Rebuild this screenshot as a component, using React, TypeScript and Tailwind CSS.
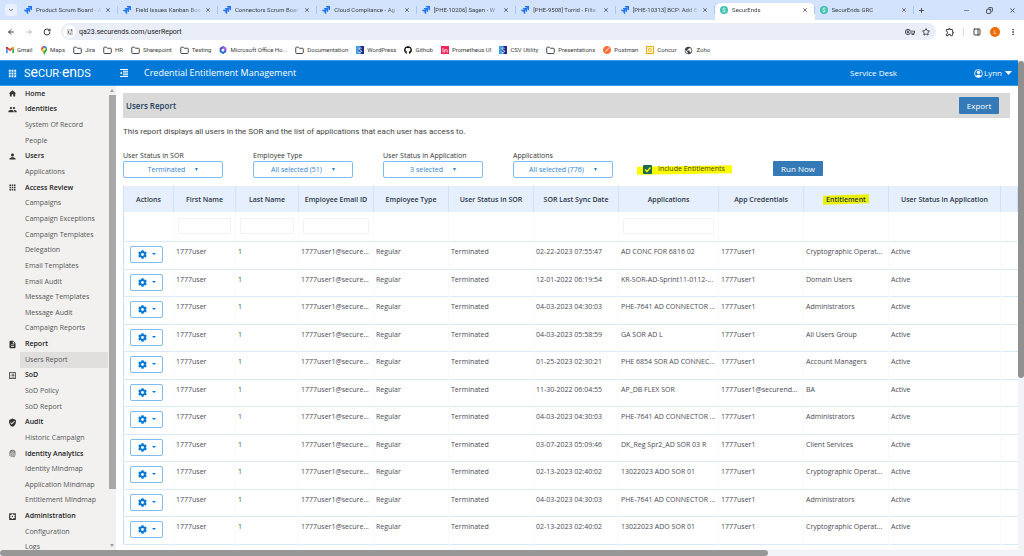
import type { ReactNode } from 'react'
import type { IconType } from 'react-icons'
import {
  MdApps,
  MdDescription,
  MdFingerprint,
  MdHome,
  MdListAlt,
  MdOutlineExtension,
  MdOutlineVpnKey,
  MdPeople,
  MdPerson,
  MdPublic,
  MdSettingsApplications,
  MdTune,
  MdVerifiedUser,
} from 'react-icons/md'
import { FaCog, FaGithub } from 'react-icons/fa'
import { SiJira, SiPostman } from 'react-icons/si'
import {
  ArrowLeft,
  ArrowRight,
  ChevronDown,
  Copy,
  EllipsisVertical,
  Folder,
  Minus,
  PanelRight,
  Plus,
  RotateCw,
  Star,
  X,
} from 'lucide-react'

const tabs = [
  { title: 'Product Scrum Board - A', jira: true },
  { title: 'Field Issues Kanban Boa', jira: true },
  { title: 'Connectors Scrum Boar', jira: true },
  { title: 'Cloud Compliance - Ag', jira: true },
  { title: '[PHE-10206] Sagen - W', jira: true },
  { title: '[PHE-9508] Torrid - Filte', jira: true },
  { title: '[PHE-10313] BCP: Add E', jira: true },
  { title: 'SecurEnds', jira: false, active: true },
  { title: 'SecurEnds GRC', jira: false },
]

type NavGroup = { label: string; icon: IconType; items: string[] }

const nav: NavGroup[] = [
  { label: 'Home', icon: MdHome, items: [] },
  { label: 'Identities', icon: MdPeople, items: ['System Of Record', 'People'] },
  { label: 'Users', icon: MdPerson, items: ['Applications'] },
  {
    label: 'Access Review',
    icon: MdApps,
    items: [
      'Campaigns',
      'Campaign Exceptions',
      'Campaign Templates',
      'Delegation',
      'Email Templates',
      'Email Audit',
      'Message Templates',
      'Message Audit',
      'Campaign Reports',
    ],
  },
  { label: 'Report', icon: MdDescription, items: ['Users Report'] },
  { label: 'SoD', icon: MdListAlt, items: ['SoD Policy', 'SoD Report'] },
  { label: 'Audit', icon: MdVerifiedUser, items: ['Historic Campaign'] },
  {
    label: 'Identity Analytics',
    icon: MdFingerprint,
    items: ['Identity Mindmap', 'Application Mindmap', 'Entitlement Mindmap'],
  },
  { label: 'Administration', icon: MdSettingsApplications, items: ['Configuration', 'Logs'] },
]

const filters = [
  { id: 'sor-status', label: 'User Status in SOR', value: 'Terminated' },
  { id: 'employee-type', label: 'Employee Type', value: 'All selected (51)' },
  { id: 'app-status', label: 'User Status in Application', value: '3 selected' },
  { id: 'applications', label: 'Applications', value: 'All selected (776)' },
]

const columns = [
  { label: 'Actions', width: 'w-[50px]' },
  { label: 'First Name', width: 'w-[62px]', filter: true },
  { label: 'Last Name', width: 'w-[63px]', filter: true },
  { label: 'Employee Email ID', width: 'w-[75px]', filter: true },
  { label: 'Employee Type', width: 'w-[75px]' },
  { label: 'User Status in SOR', width: 'w-[85px]' },
  { label: 'SOR Last Sync Date', width: 'w-[85px]' },
  { label: 'Applications', width: 'w-[100px]', filter: true },
  { label: 'App Credentials', width: 'w-[85px]' },
  { label: 'Entitlement', width: 'w-[85px]', highlight: true },
  { label: 'User Status in Application', width: 'w-[112px]' },
  { label: '', width: '' },
]

const rows = [
  ['02-22-2023 07:55:47', 'AD CONC FOR 6816 02', '1777user1', 'Cryptographic Operat...'],
  ['12-01-2022 06:19:54', 'KR-SOR-AD-Sprint11-0112-...', '1777user1', 'Domain Users'],
  ['04-03-2023 04:30:03', 'PHE-7641 AD CONNECTOR ...', '1777user1', 'Administrators'],
  ['04-03-2023 05:58:59', 'GA SOR AD L', '1777user1', 'All Users Group'],
  ['01-25-2023 02:30:21', 'PHE 6854 SOR AD CONNEC...', '1777user1', 'Account Managers'],
  ['11-30-2022 06:04:55', 'AP_DB FLEX SOR', '1777user1@securend...', 'BA'],
  ['04-03-2023 04:30:03', 'PHE-7641 AD CONNECTOR ...', '1777user1', 'Administrators'],
  ['03-07-2023 05:09:46', 'DK_Reg Spr2_AD SOR 03 R', '1777user1', 'Client Services'],
  ['02-13-2023 02:40:02', '13022023 ADO SOR 01', '1777user1', 'Cryptographic Operat...'],
  ['04-03-2023 04:30:03', 'PHE-7641 AD CONNECTOR ...', '1777user1', 'Administrators'],
  ['02-13-2023 02:40:02', '13022023 ADO SOR 01', '1777user1', 'Cryptographic Operat...'],
]

function SecurEndsIcon() {
  return (
    <svg viewBox="0 0 16 16" className="size-[8px] shrink-0">
      <circle cx="8" cy="8" r="8" fill="#3fc1b0" />
      <path d="M11 5.2C9.5 3.6 5.6 4 5.6 6.2c0 2.4 5 1.2 5 3.6 0 2.2-4 2.4-5.6.8" fill="none" stroke="#fff" strokeWidth="1.6" />
    </svg>
  )
}

function GmailIcon() {
  return (
    <svg viewBox="0 0 24 18" className="w-[8px]">
      <path d="M0 2v16h5V7z" fill="#4285f4" />
      <path d="M24 2v16h-5V7z" fill="#34a853" />
      <path d="M0 2.500C0 0 3 -1 5 .7l7 5.500 7-5.500c2-1.700 5-.700 5 1.800L12 12.500z" fill="#ea4335" />
      <path d="M0 2.500C0 0 3 -1 5 .7v6.200L0 3.500z" fill="#c5221f" />
      <path d="M24 2.500C24 0 21 -1 19 .7v6.200l5-3.400z" fill="#fbbc04" />
    </svg>
  )
}

function MapsIcon() {
  return (
    <svg viewBox="0 0 16 22" className="h-[9px]">
      <path d="M8 0a8 8 0 0 0-6 2.700L6 6z" fill="#ea4335" />
      <path d="M8 0a8 8 0 0 1 6 2.700L6 11 5 6z" fill="#4285f4" />
      <path d="M2 2.700C0 5 0 8.500 1.300 11l6-5z" fill="#ea4335" />
      <path d="M14 2.700C17 6 16 10 13 13c-3 3.500-3 6-5 9-1-3-1.500-5-3.500-7z" fill="#34a853" />
      <path d="M1.300 11c.8 1.600 2 2.800 3.200 4L11 7 7.500 5z" fill="#fbbc04" />
      <circle cx="8" cy="8" r="2.800" fill="#fff" />
    </svg>
  )
}

function OfficeIcon() {
  return (
    <svg viewBox="0 0 16 16" className="size-[8px]">
      <path d="M8 0l6.500 3.800v8L8 16l-6.500-4.200v-8z" fill="#4a53cf" />
      <path d="M8 0l6.500 3.800v4L8 5z" fill="#b45ae0" />
      <path d="M1.500 8v3.800L8 16l4-2.600z" fill="#2f7de1" />
      <circle cx="8" cy="8" r="3" fill="#fff" />
    </svg>
  )
}

function ShieldIcon() {
  return (
    <svg viewBox="0 0 16 16" className="size-[8px]">
      <path d="M0 0h16v16H0z" fill="#1d2b8f" />
      <path d="M0 0h9L5 8l5 8H0z" fill="#3fa0e8" />
      <path d="M11 4.500C8 3 5 4.500 6 6.500s5 1.500 5 4-4 3-6 1.500" fill="none" stroke="#fff" strokeWidth="2" />
    </svg>
  )
}

function PrometheusIcon() {
  return (
    <svg viewBox="0 0 16 16" className="size-[8px]">
      <path d="M0 0h16v16H0z" fill="#f0235a" />
      <path d="M4 4v9M7.500 13V7m0 2c1-2.500 5-2.500 5 .5V13" fill="none" stroke="#fff" strokeWidth="1.600" />
    </svg>
  )
}

function ConcurIcon() {
  return (
    <svg viewBox="0 0 16 16" className="size-[8px]">
      <path d="M1 1h14v14H1z" fill="#fff6dc" stroke="#f0ab00" strokeWidth="2" />
      <path d="M10.500 5.500C8 3.500 4.500 5 4.500 8s3.500 4.500 6 2.500M8 8h4" fill="none" stroke="#f0ab00" strokeWidth="1.800" />
    </svg>
  )
}

function OutdentIcon() {
  return (
    <svg viewBox="0 0 16 16" className="size-[8px]" fill="#fff">
      <path d="M0 0h16v2H0zM6 3.500h10v2H6zM6 7h10v2H6zM6 10.500h10v2H6zM0 14h16v2H0zM4 5v6L0 8z" />
    </svg>
  )
}

const folder = <Folder className="size-[9px] stroke-[2.5] text-[#3c4043]" />

const bookmarks: { label: string; icon: ReactNode }[] = [
  { label: 'Gmail', icon: <GmailIcon /> },
  { label: 'Maps', icon: <MapsIcon /> },
  { label: 'Jira', icon: folder },
  { label: 'HR', icon: folder },
  { label: 'Sharepoint', icon: folder },
  { label: 'Testing', icon: folder },
  { label: 'Microsoft Office Ho...', icon: <OfficeIcon /> },
  { label: 'Documentation', icon: folder },
  { label: 'WordPress', icon: <ShieldIcon /> },
  { label: 'Github', icon: <FaGithub className="size-[8px] text-black" /> },
  { label: 'Prometheus UI', icon: <PrometheusIcon /> },
  { label: 'CSV Utility', icon: <ShieldIcon /> },
  { label: 'Presentations', icon: folder },
  { label: 'Postman', icon: <SiPostman className="size-[8px] text-[#ff6c37]" /> },
  { label: 'Concur', icon: <ConcurIcon /> },
  { label: 'Zoho', icon: <MdPublic className="size-[9px] text-[#3c4043]" /> },
]

function Caret({ className }: { className: string }) {
  return (
    <svg viewBox="0 0 8 5" preserveAspectRatio="none" className={className} fill="currentColor">
      <path d="M0 0h8L4 5z" />
    </svg>
  )
}

function Browser() {
  return (
    <div className="shrink-0 font-[Roboto] text-[7px] leading-[10px] text-[#3c4043]">
      {/* Tab strip */}
      <div className="flex h-5 items-center bg-[#d3e3fd]">
        <button aria-label="Search tabs" className="mr-[2px] ml-[5px] flex size-3 items-center justify-center rounded bg-[#eaf1fe]">
          <ChevronDown className="size-[6px] stroke-3" />
        </button>
        <div className="mr-[4px] flex h-full min-w-0 flex-1">
          {tabs.map((tab) => (
            <div
              key={tab.title}
              className={
                tab.active
                  ? 'mt-[3px] flex min-w-0 flex-1 items-center rounded-t-md bg-white pr-[6px] pb-[3px] pl-[5px]'
                  : 'flex min-w-0 flex-1 items-center pr-[6px] pl-[5px]'
              }
            >
              {tab.jira ? <SiJira className="size-[8px] shrink-0 text-[#1f74f2]" /> : <SecurEndsIcon />}
              <span className="ml-1 flex-1 text-[6px] whitespace-nowrap [mask-image:linear-gradient(to_right,black_80%,transparent)]">
                {tab.title}
              </span>
              <button aria-label="Close tab" className="ml-[3px]">
                <X className="size-[6px] stroke-3" />
              </button>
              <span className="-mr-[6px] ml-[6px] h-2 w-px bg-[#a8c7fa]" />
            </div>
          ))}
        </div>
        <button aria-label="New tab">
          <Plus className="size-[7px] stroke-3" />
        </button>
        <div className="mr-[8px] ml-[38px] flex gap-[16px]">
          <button aria-label="Minimize">
            <Minus className="size-[7px]" />
          </button>
          <button aria-label="Restore">
            <Copy className="size-[7px] -scale-x-100 stroke-3" />
          </button>
          <button aria-label="Close">
            <X className="size-[7px] stroke-3" />
          </button>
        </div>
      </div>

      {/* Address bar */}
      <div className="flex h-5 items-center bg-white pt-[3px] pr-[7px] pl-[7px]">
        <button aria-label="Back">
          <ArrowLeft className="size-[8px] stroke-3" />
        </button>
        <button aria-label="Forward" className="ml-[10px] text-[#9aa0a6]">
          <ArrowRight className="size-[8px]" />
        </button>
        <button aria-label="Reload" className="ml-[10px]">
          <RotateCw className="size-[8px] stroke-3" />
        </button>
        <div className="ml-[10px] flex h-[17px] flex-1 items-center rounded-full bg-[#e9eef8] pr-[6px] pl-[2px]">
          <span className="flex size-[13px] items-center justify-center rounded-full bg-white">
            <MdTune className="size-[8px]" />
          </span>
          <input
            aria-label="Address"
            defaultValue="qa23.securends.com/userReport"
            className="ml-[3px] min-w-0 flex-1 bg-transparent text-[7px] text-[#202124] outline-none"
          />
          <MdOutlineVpnKey className="size-[10px]" />
          <Star className="ml-[7px] size-[8px] stroke-3" />
        </div>
        <MdOutlineExtension className="ml-[9px] size-[10px]" />
        <span className="ml-[8px] h-[8px] w-px bg-[#c7dbfb]" />
        <PanelRight className="ml-[9px] size-[8px] stroke-3" />
        <span className="ml-[9px] flex size-[10px] items-center justify-center rounded-full bg-[#ef6c00] text-[5px] text-white">
          L
        </span>
        <EllipsisVertical className="ml-[9px] size-[8px] stroke-3" />
      </div>

      {/* Bookmarks */}
      <div className="flex h-5 items-center gap-[8px] bg-white pl-[6px] text-[6px]">
        {bookmarks.map((b) => (
          <a key={b.label} href="#" className="flex items-center gap-[3px] whitespace-nowrap">
            {b.icon}
            {b.label}
          </a>
        ))}
      </div>
    </div>
  )
}

function Header() {
  return (
    <header className="flex h-[26px] shrink-0 items-center border-y border-[#3d9ae6] bg-[#0078d7] pr-[6px] pl-[7px] text-[9px] leading-3 text-white">
      <MdApps className="size-[11px]" />
      <span className="ml-[6px] flex w-[68px] items-baseline font-[Roboto] text-[11px]">
        S<span className="text-[14px]">e</span>CUR·<span className="text-[14px]">en</span>DS
      </span>
      <button aria-label="Toggle menu" className="ml-[28px]">
        <OutdentIcon />
      </button>
      <h1 className="ml-[16px]">Credential Entitlement Management</h1>
      <a href="#" className="mr-[77px] ml-auto text-[8px]">
        Service Desk
      </a>
      <button className="flex items-center gap-px text-[8px]">
        <svg viewBox="0 0 16 16" className="size-[9px]">
          <circle cx="8" cy="8" r="7" fill="none" stroke="#fff" strokeWidth="1.500" />
          <circle cx="8" cy="6" r="3" fill="#fff" />
          <path d="M3 13c1-4 9-4 10 0-3 2.500-7 2.500-10 0z" fill="#fff" />
        </svg>
        Lynn
        <Caret className="ml-[2px] h-[4px] w-[7px]" />
      </button>
    </header>
  )
}

function Sidebar() {
  return (
    <aside className="flex w-[116px] shrink-0 bg-[#f2f1f0]">
      <nav className="flex flex-1 flex-col pb-px text-[7px] leading-[10px] text-[#555]">
        {nav.flatMap(({ label, icon: Icon, items }) => [
          <a key={label} href="#" className="flex min-h-0 flex-1 items-center pl-[8px] font-semibold text-[#222]">
            <Icon className="mr-[8px] size-[9px] text-[#333]" />
            {label}
          </a>,
          ...items.map((item) => (
            <a
              key={`${label}-${item}`}
              href="#"
              className={
                item === 'Users Report'
                  ? 'ml-[20px] flex min-h-0 flex-1 items-center bg-[#e0dfde] pl-[5px]'
                  : 'ml-[20px] flex min-h-0 flex-1 items-center pl-[5px]'
              }
            >
              {item}
            </a>
          )),
        ])}
      </nav>
      <div className="flex w-[8px] flex-col items-center bg-[#f1f1f1] pt-[3px] pb-[9px] text-[#a0a0a0]">
        <Caret className="mb-[3px] h-[3px] w-[4px] rotate-180" />
        <div className="h-[86%] w-[7px] bg-[#a8a8a8]" />
        <Caret className="mt-auto h-[3px] w-[4px]" />
      </div>
    </aside>
  )
}

function Filters() {
  return (
    <form className="mt-[12px] flex items-end gap-[30px]">
      {filters.map((f) => (
        <div key={f.id} className="w-[100px]">
          <label htmlFor={f.id} className="block leading-[11px] whitespace-nowrap text-[#333]">
            {f.label}
          </label>
          <div className="flex h-[17px] items-center justify-center gap-[10px] rounded-xs border border-[#7fbcf0] text-[#2b83d3]">
            <select id={f.id} className="field-sizing-content appearance-none bg-transparent leading-[11px] outline-none">
              <option>{f.value}</option>
            </select>
            <Caret className="h-[3px] w-[3px]" />
          </div>
        </div>
      ))}
      <div className="relative flex h-[17px] w-[100px] items-center gap-[6px]">
        <span className="absolute -left-[6px] h-[8px] w-[95px] -skew-y-1 bg-[#fdfd00]" />
        <span className="relative flex size-[9px]">
          <input
            id="include"
            type="checkbox"
            defaultChecked
            className="size-full appearance-none rounded-[1px] bg-[#1b6a4b]"
          />
          <svg viewBox="0 0 9 9" className="pointer-events-none absolute inset-0 size-[9px]">
            <path d="M2 4.500l2 2 3.500-4" fill="none" stroke="#fdfd00" strokeWidth="1.400" />
          </svg>
        </span>
        <label htmlFor="include" className="relative whitespace-nowrap text-[#3b3b10]">
          Include Entitlements
        </label>
      </div>
      <button type="button" className="mb-[2px] h-[15px] w-[50px] rounded-[1px] bg-[#337ab7] text-[8px] leading-[11px] text-white">
        Run Now
      </button>
    </form>
  )
}

function ReportTable() {
  return (
    <table className="mt-[8px] w-full table-fixed border-collapse border-l border-[#c5e0f7] text-left text-[7px] leading-[11px] text-[#4a4a55]">
      <thead>
        <tr className="h-[26px] bg-[#e6effd] text-[#2a3547]">
          {columns.map((c) => (
            <th key={c.label} className={`${c.width} border-x border-[#cfe3f8] p-0 text-center font-semibold whitespace-nowrap`}>
              <span className="relative">
                {c.highlight && <span className="absolute -inset-x-[3px] inset-y-0 -skew-y-2 bg-[#eaf200]" />}
                <span className="relative">{c.label}</span>
              </span>
            </th>
          ))}
        </tr>
        <tr className="h-[29px] border-b border-[#d8eafa]">
          {columns.map((c) => (
            <td key={c.label} className="border-r border-[#f8fafd] px-[4px] py-0">
              {c.filter && (
                <input
                  aria-label={`Filter ${c.label}`}
                  className="block h-4 w-full rounded-[1px] border border-[#f2f2f2] bg-white outline-none"
                />
              )}
            </td>
          ))}
        </tr>
      </thead>
      <tbody>
        {rows.map(([date, app, credential, entitlement], i) => (
          <tr key={i} className="border-b border-[#d8eafa] odd:h-7 even:h-[27px]">
            <td className="p-0 pt-[4px] pl-[6px] align-top">
              <button
                aria-label="Row actions"
                className="flex h-[17px] w-[33px] items-center justify-center gap-[5px] rounded-xs border border-[#7fbcf0] text-[#0078d7]"
              >
                <FaCog className="size-[9px]" />
                <Caret className="h-[2px] w-[4px]" />
              </button>
            </td>
            {['1777user', '1', '1777user1@secure...', 'Regular', 'Terminated', date, app, credential, entitlement, 'Active', ''].map(
              (text, j) => (
                <td key={j} className="border-l border-[#f8fafd] px-[2px] pt-[4px] pb-0 align-top whitespace-nowrap">
                  {text}
                </td>
              ),
            )}
          </tr>
        ))}
      </tbody>
    </table>
  )
}

export default function App() {
  return (
    <div className="flex h-screen flex-col overflow-hidden bg-white font-['Open_Sans',sans-serif]">
      <Browser />
      <div className="relative flex min-h-0 flex-1">
        <div className="flex min-w-0 flex-1 flex-col">
          <Header />
          <div className="flex min-h-0 flex-1">
            <Sidebar />
            <main className="min-w-0 flex-1 overflow-hidden pt-[7px] pl-[7px] text-[7px]">
              <div className="mr-[8px] flex h-[25px] items-center justify-between bg-[#d9d9d9] pr-[11px] pl-[3px]">
                <h2 className="text-[8px] font-semibold text-[#1f4060]">Users Report</h2>
                <button className="h-[17px] w-[40px] rounded-[1px] bg-[#337ab7] text-[8px] text-white">Export</button>
              </div>
              <p className="mt-[8px] font-[Roboto] text-[8px] leading-[12px] text-[#444]">
                This report displays all users in the SOR and the list of applications that each user has access to.
              </p>
              <Filters />
              <ReportTable />
            </main>
          </div>
        </div>
        <div className="w-[6px] shrink-0 bg-[#f1f3f9] pt-px">
          <div className="h-[64%] rounded-full bg-[#909090]" />
        </div>
        <div className="absolute inset-x-0 bottom-0 h-[6px] bg-[#f1f3f9]">
          <div className="h-full w-3/4 rounded-full bg-[#979797]" />
        </div>
      </div>
    </div>
  )
}
